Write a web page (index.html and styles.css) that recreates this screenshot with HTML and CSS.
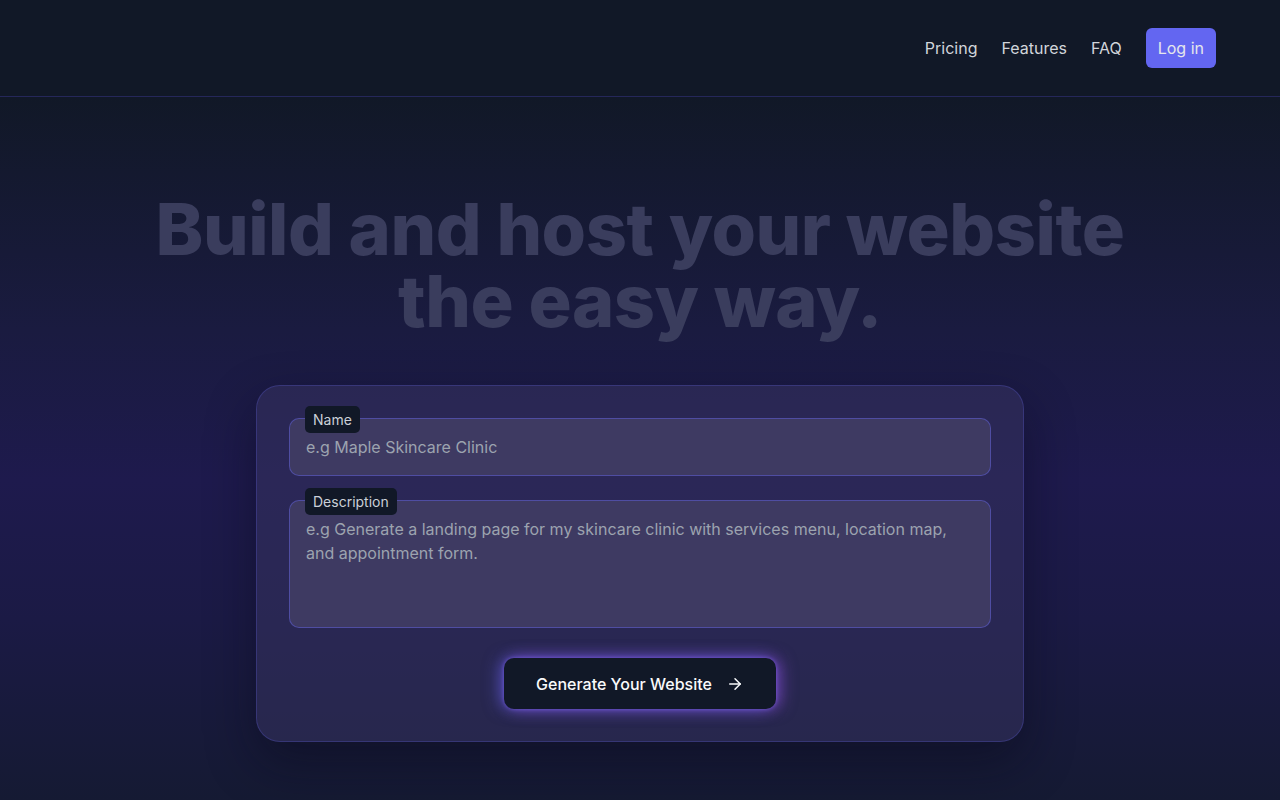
FILE: index.html
```html
<!DOCTYPE html>
<html lang="en">
<head>
  <meta charset="UTF-8" />
  <meta name="viewport" content="width=device-width, initial-scale=1.0" />
  <title>Build and host your website</title>
  <link rel="stylesheet" href="styles.css">
</head>
<body>
  <header class="site-header">
    <nav class="nav">
      <a href="#pricing" class="nav-link">Pricing</a>
      <a href="#features" class="nav-link">Features</a>
      <a href="#faq" class="nav-link">FAQ</a>
      <a href="#login" class="login-btn">Log in</a>
    </nav>
  </header>

  <main class="hero">
    <h1 class="hero-title">Build and host your website<br>the easy way.</h1>

    <form class="gen-card" onsubmit="return false;">
      <div class="field">
        <label class="field-label" for="site-name">Name</label>
        <input class="field-input" id="site-name" type="text" placeholder="e.g Maple Skincare Clinic">
      </div>
      <div class="field">
        <label class="field-label" for="site-desc">Description</label>
        <textarea class="field-input field-area" id="site-desc" placeholder="e.g Generate a landing page for my skincare clinic with services menu, location map, and appointment form."></textarea>
      </div>
      <div class="actions">
        <button class="gen-btn" type="submit">
          Generate Your Website
          <svg width="18" height="18" viewBox="0 0 24 24" fill="none" stroke="currentColor" stroke-width="2" stroke-linecap="round" stroke-linejoin="round"><path d="M5 12h14"/><path d="M12 5l7 7-7 7"/></svg>
        </button>
      </div>
    </form>
  </main>
</body>
</html>
```

FILE: styles.css
```css
* {
  box-sizing: border-box;
}
html, body {
  height: 100%;
}
body {
  margin: 0;
  font-family: Inter, 'Noto Sans', sans-serif;
  color: #d1d5db;
  background: linear-gradient(180deg, #111827 0px, #111827 96px, #1a1b40 330px, #1e1a4d 480px, #1b1a45 620px, #151a33 800px);
  overflow: hidden;
}
.site-header {
  height: 97px;
  border-bottom: 1px solid #25275a;
  background: #111827;
  display: flex;
  align-items: center;
  justify-content: flex-end;
  padding: 0 64px;
}
.nav {
  display: flex;
  align-items: center;
  gap: 24px;
}
.nav-link {
  color: #d1d5db;
  text-decoration: none;
  font-size: 16px;
}
.login-btn {
  background: #6366f1;
  color: #e5e7eb;
  text-decoration: none;
  font-size: 16px;
  padding: 8px 12px;
  border-radius: 6px;
  line-height: 24px;
}
.hero {
  display: flex;
  flex-direction: column;
  align-items: center;
  padding-top: 96px;
}
.hero-title {
  margin: 0;
  font-size: 72px;
  line-height: 72px;
  font-weight: 800;
  text-align: center;
  color: #3a3d5d;
  letter-spacing: -0.5px;
}
.gen-card {
  margin-top: 48px;
  width: 768px;
  padding: 32px;
  border-radius: 24px;
  border: 1px solid rgba(99, 102, 241, 0.25);
  background: rgba(55, 52, 98, 0.5);
  box-shadow: 0 20px 50px rgba(8, 8, 25, 0.45);
  display: flex;
  flex-direction: column;
  gap: 24px;
}
.field {
  position: relative;
}
.field-label {
  position: absolute;
  top: -12px;
  left: 16px;
  background: #111827;
  color: #cbd0d8;
  font-size: 14px;
  line-height: 20px;
  padding: 4px 8px 3px;
  border-radius: 5px;
}
.field-input {
  display: block;
  width: 100%;
  font-family: inherit;
  font-size: 16px;
  line-height: 24px;
  color: #e5e7eb;
  background: #3e3a62;
  border: 1px solid rgba(99, 102, 241, 0.45);
  border-radius: 10px;
  padding: 16px;
  outline: none;
}
.field-input::placeholder {
  color: #9ca3af;
}
.field-area {
  height: 128px;
  resize: none;
  padding-top: 16px;
}
.actions {
  display: flex;
  justify-content: center;
  padding-top: 6px;
}
.gen-btn {
  display: flex;
  align-items: center;
  gap: 14px;
  background: #111827;
  color: #f9fafb;
  font-family: inherit;
  font-size: 16px;
  font-weight: 500;
  border: none;
  border-radius: 10px;
  height: 51px;
  padding: 0 32px;
  cursor: pointer;
  box-shadow: -5px 0 16px rgba(99, 102, 241, 0.5), 5px 0 16px rgba(168, 85, 247, 0.5), 0 0 4px rgba(129, 98, 246, 0.7);
}
```
